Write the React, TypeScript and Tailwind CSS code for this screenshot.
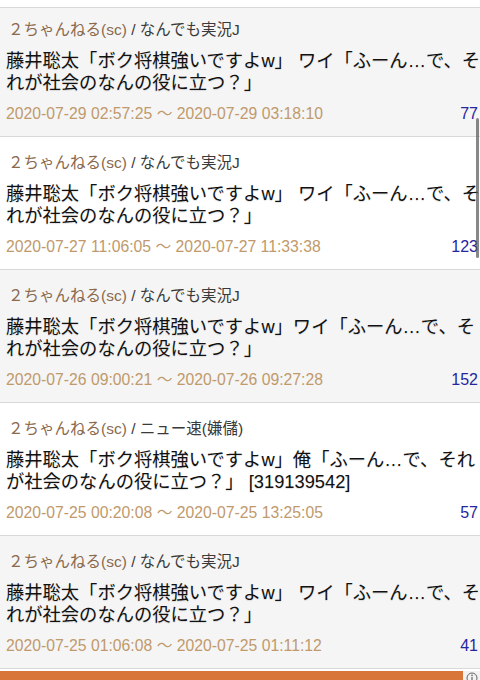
import React from 'react';

type Thread = {
  board: string;
  lines: string[];
  from: string;
  to: string;
  count: number;
};

const threads: Thread[] = [
  {
    board: 'なんでも実況J',
    lines: ['藤井聡太「ボク将棋強いですよw」 ワイ「ふーん…で、そ', 'れが社会のなんの役に立つ？」'],
    from: '2020-07-29 02:57:25',
    to: '2020-07-29 03:18:10',
    count: 77,
  },
  {
    board: 'なんでも実況J',
    lines: ['藤井聡太「ボク将棋強いですよw」 ワイ「ふーん…で、そ', 'れが社会のなんの役に立つ？」'],
    from: '2020-07-27 11:06:05',
    to: '2020-07-27 11:33:38',
    count: 123,
  },
  {
    board: 'なんでも実況J',
    lines: ['藤井聡太「ボク将棋強いですよw」ワイ「ふーん…で、そ', 'れが社会のなんの役に立つ？」'],
    from: '2020-07-26 09:00:21',
    to: '2020-07-26 09:27:28',
    count: 152,
  },
  {
    board: 'ニュー速(嫌儲)',
    lines: ['藤井聡太「ボク将棋強いですよw」俺「ふーん…で、それ', 'が社会のなんの役に立つ？」 [319139542]'],
    from: '2020-07-25 00:20:08',
    to: '2020-07-25 13:25:05',
    count: 57,
  },
  {
    board: 'なんでも実況J',
    lines: ['藤井聡太「ボク将棋強いですよw」 ワイ「ふーん…で、そ', 'れが社会のなんの役に立つ？」'],
    from: '2020-07-25 01:06:08',
    to: '2020-07-25 01:11:12',
    count: 41,
  },
];

// first row is scrolled a little under the top edge
const ThreadRow = ({ thread, odd, first }: { thread: Thread; odd: boolean; first: boolean }) => (
  <div
    className={`border-b border-[#d9d9d9] pl-[6px] pr-[2px] ${first ? 'h-[129px] pt-[12px]' : 'h-[133px] pt-[16px]'} ${
      odd ? 'bg-[#f5f5f5]' : 'bg-white'
    }`}
  >
    <div className="h-[20px] pl-[2px] text-[15.5px] leading-[20px] whitespace-nowrap">
      <span className="text-[#8a6a4e]">２ちゃんねる(sc)</span>
      <span className="text-[#3a3a3a]"> / {thread.board}</span>
    </div>
    <div className="mt-[10px] text-[18.3px] leading-[22px] text-[#111] [text-shadow:0_1px_1px_rgba(0,0,0,0.12)]">
      {thread.lines.map(line => (
        <div key={line} className="whitespace-nowrap">
          {line}
        </div>
      ))}
    </div>
    <div className="mt-[10px] flex h-[20px] items-baseline justify-between leading-[20px]">
      <span className="text-[15.75px] text-[#c09a6c] whitespace-nowrap">
        {thread.from} 〜 {thread.to}
      </span>
      <span className="text-[16px] text-[#2525a0]">{thread.count}</span>
    </div>
  </div>
);

export default function App() {
  return (
    <div
      className="relative h-[680px] w-[480px] overflow-hidden bg-white"
      style={{ fontFamily: '"Liberation Sans", "Noto Sans CJK JP", sans-serif' }}
    >
      <div className="h-[8px] border-b border-[#d9d9d9]" />
      {threads.map((thread, i) => (
        <ThreadRow key={thread.from} thread={thread} odd={i % 2 === 0} first={i === 0} />
      ))}
      <div className="mt-[2px] flex h-[20px] justify-end bg-[#d8763a]">
        <div className="flex h-[14px] w-[17px] items-center justify-center bg-[#f2f2f2]">
          <svg width="12" height="12" viewBox="0 0 12 12">
            <circle cx="6" cy="6" r="5" fill="none" stroke="#666" strokeWidth="1" />
            <rect x="5.4" y="5" width="1.2" height="4" fill="#666" />
            <circle cx="6" cy="3.4" r="0.8" fill="#666" />
          </svg>
        </div>
      </div>
      <div className="absolute right-[1px] top-[118px] h-[140px] w-[3px] rounded-full bg-[#555]/70" />
    </div>
  );
}
